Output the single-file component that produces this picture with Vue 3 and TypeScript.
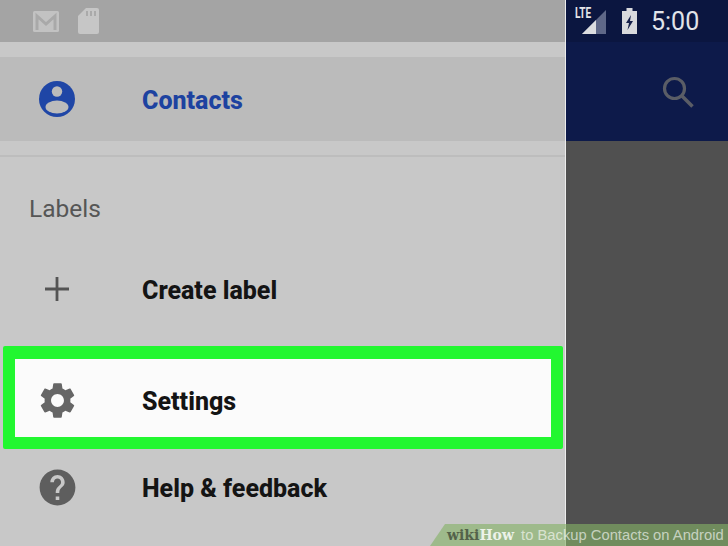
<script setup lang="ts">
const settingsPath = 'M19.14 12.94c.04-.3.06-.61.06-.94 0-.32-.02-.64-.07-.94l2.03-1.58c.18-.14.23-.41.12-.61l-1.92-3.32c-.12-.22-.37-.29-.59-.22l-2.39.96c-.5-.38-1.03-.7-1.62-.94l-.36-2.54c-.04-.24-.24-.41-.48-.41h-3.84c-.24 0-.43.17-.47.41l-.36 2.54c-.59.24-1.13.57-1.62.94l-2.39-.96c-.22-.08-.47 0-.59.22L2.74 8.87c-.12.21-.08.47.12.61l2.03 1.58c-.05.3-.09.63-.09.94s.02.64.07.94l-2.03 1.58c-.18.14-.23.41-.12.61l1.92 3.32c.12.22.37.29.59.22l2.39-.96c.5.38 1.03.7 1.62.94l.36 2.54c.05.24.24.41.48.41h3.84c.24 0 .44-.17.47-.41l.36-2.54c.59-.24 1.13-.56 1.62-.94l2.39.96c.22.08.47 0 .59-.22l1.92-3.32c.12-.22.07-.47-.12-.61l-2.01-1.58zM12 15.6c-1.98 0-3.6-1.62-3.6-3.6s1.62-3.6 3.6-3.6 3.6 1.62 3.6 3.6-1.62 3.6-3.6 3.6z'
const helpPath = 'M12 2C6.48 2 2 6.48 2 12s4.48 10 10 10 10-4.48 10-10S17.52 2 12 2zm1 17h-2v-2h2v2zm2.07-7.75l-.9.92C13.45 12.9 13 13.5 13 15h-2v-.5c0-1.1.45-2.1 1.17-2.83l1.24-1.26c.37-.36.59-.86.59-1.41 0-1.1-.9-2-2-2s-2 .9-2 2H8c0-2.21 1.79-4 4-4s4 1.79 4 4c0 .88-.36 1.68-.93 2.25z'
</script>

<template>
  <div class="screen">
    <div class="drawer">
      <div class="account">
        <svg class="mail" width="26" height="21" viewBox="0 0 26 21">
          <rect x="0" y="0" width="26" height="21" rx="1.5" fill="#c2c2c2" />
          <path d="M4 19V5l9 8 9-8v14" fill="none" stroke="#a9a9a9" stroke-width="3" />
        </svg>
        <svg width="21" height="26" viewBox="0 0 21 26">
          <path d="M8 0h11a2 2 0 0 1 2 2v22a2 2 0 0 1-2 2H2a2 2 0 0 1-2-2V8z" fill="#c6c6c6" />
          <path d="M9 3v5M13 3v5M17 3v5" stroke="#a3a3a3" stroke-width="1.6" />
        </svg>
      </div>
      <div class="gap-top"></div>
      <div class="row contacts">
        <span class="icon">
          <svg width="38" height="38" viewBox="0 0 38 38">
            <circle cx="19" cy="19" r="18" fill="#1f46a6" />
            <circle cx="19" cy="11.5" r="5.2" fill="#bbbbbb" />
            <ellipse cx="19" cy="27" rx="11.5" ry="6.5" fill="#bbbbbb" />
          </svg>
        </span>
        <span class="name blue">Contacts</span>
      </div>
      <div class="gap-bottom"></div>
      <div class="section-title">Labels</div>
      <div class="row create">
        <span class="icon">
          <svg width="26" height="26" viewBox="0 0 26 26">
            <path d="M13 1v24M1 13h24" stroke="#545454" stroke-width="2.8" />
          </svg>
        </span>
        <span class="name">Create label</span>
      </div>
      <div class="highlight">
        <div class="row settings">
          <span class="icon">
            <svg width="43" height="43" viewBox="0 0 24 24"><path :d="settingsPath" fill="#666666" /></svg>
          </span>
          <span class="name">Settings</span>
        </div>
      </div>
      <div class="row help">
        <span class="icon">
          <svg width="43" height="43" viewBox="0 0 24 24"><path :d="helpPath" fill="#5e5e5e" /></svg>
        </span>
        <span class="name">Help &amp; feedback</span>
      </div>
    </div>

    <div class="side">
      <div class="appbar">
        <div class="status">
          <div class="signal">
            <span class="lte">LTE</span>
            <svg width="24" height="24" viewBox="0 0 24 24">
              <path d="M24 0v24H0z" fill="#5f6888" />
              <path d="M14 10v14H0z" fill="#dcdde0" />
            </svg>
          </div>
          <svg class="battery" width="15" height="26" viewBox="0 0 15 26">
            <path d="M4.500 0h6v3H15v23H0V3h4.500z" fill="#d9dadd" />
            <path d="M9 7 4 15h3l-1.500 7L11 13H8z" fill="#16204a" />
          </svg>
          <span class="time">5:00</span>
        </div>
        <div class="search">
          <svg width="32" height="32" viewBox="0 0 32 32">
            <circle cx="12.500" cy="12.500" r="10" fill="none" stroke="#5a5d66" stroke-width="3.200" />
            <path d="M20 20l10.500 10.500" stroke="#5a5d66" stroke-width="3.600" />
          </svg>
        </div>
      </div>
      <div class="scrim"></div>
    </div>

    <div class="watermark"><b class="wiki">wiki</b><b class="how">How</b> to Backup Contacts on Android</div>
  </div>
</template>

<style>
html, body { margin: 0; background: #c8c8c8; }
</style>

<style scoped>
.screen {
  position: relative;
  width: 728px;
  height: 546px;
  overflow: hidden;
  display: flex;
  font-family: Roboto, "Liberation Sans", sans-serif;
}
.drawer {
  width: 565px;
  flex-shrink: 0;
  background: #c8c8c8;
  border-right: 1px solid #ececec;
  display: flex;
  flex-direction: column;
}
.account {
  height: 42px;
  background: #a4a4a4;
  display: flex;
  align-items: center;
  gap: 19px;
  padding-left: 33px;
}
.mail { margin-top: 1px; }
.gap-top { height: 15px; }
.row {
  display: flex;
  align-items: center;
}
.icon {
  width: 114px;
  flex-shrink: 0;
  display: flex;
  justify-content: center;
}
.name {
  margin-left: 28px;
  padding-top: 3px;
  font-size: 25px;
  font-weight: 800;
  color: #141414;
  white-space: nowrap;
}
.name.blue { color: #1d42a0; }
.contacts {
  height: 84px;
  background: #bbbbbb;
}
.gap-bottom {
  height: 14px;
  border-bottom: 2px solid #bdbdbd;
}
.section-title {
  margin: 38px 0 0 29px;
  height: 30px;
  line-height: 28px;
  font-size: 24.5px;
  color: #565656;
}
.create {
  height: 84px;
  margin-top: 22px;
}
.highlight {
  margin: 15px 2px 0 3px;
  height: 103px;
  box-sizing: border-box;
  border: 12px solid #22f730;
  border-top-width: 13px;
  border-radius: 2px;
  background: #fbfbfb;
}
.settings {
  height: 78px;
  margin-left: -15px;
  margin-top: 2px;
}
.help {
  height: 76px;
}
.side {
  flex: 1;
  display: flex;
  flex-direction: column;
}
.appbar {
  height: 141px;
  background: #0d1a4a;
}
.status {
  height: 42px;
  background: #0b1640;
  display: flex;
  align-items: center;
  padding-left: 16px;
}
.signal {
  position: relative;
  width: 24px;
  height: 24px;
  margin-top: 2px;
}
.lte {
  position: absolute;
  left: -7px;
  top: -5px;
  font-size: 14px;
  font-weight: 700;
  color: #e4e5e8;
  transform: scaleX(0.72);
  transform-origin: left top;
}
.battery { margin-left: 16px; }
.time {
  margin-left: 14px;
  font-size: 25px;
  color: #e2e4e9;
}
.search {
  display: flex;
  justify-content: flex-end;
  padding: 34px 34px 0 0;
}
.scrim {
  flex: 1;
  background: #505050;
}
.watermark {
  position: absolute;
  left: 430px;
  right: 0;
  bottom: 0;
  height: 22px;
  line-height: 22px;
  padding-left: 17px;
  background: rgba(132, 178, 102, 0.62);
  clip-path: polygon(15px 0, 100% 0, 100% 100%, 0 100%);
  font-family: "Liberation Sans", sans-serif;
  font-size: 14.75px;
  color: rgba(255, 255, 255, 0.62);
  white-space: nowrap;
}
.wiki, .how {
  font-family: "DejaVu Serif", serif;
  font-size: 14px;
}
.wiki { color: #54624a; }
.how {
  margin-right: 3px;
  color: rgba(255, 255, 255, 0.82);
}
</style>
